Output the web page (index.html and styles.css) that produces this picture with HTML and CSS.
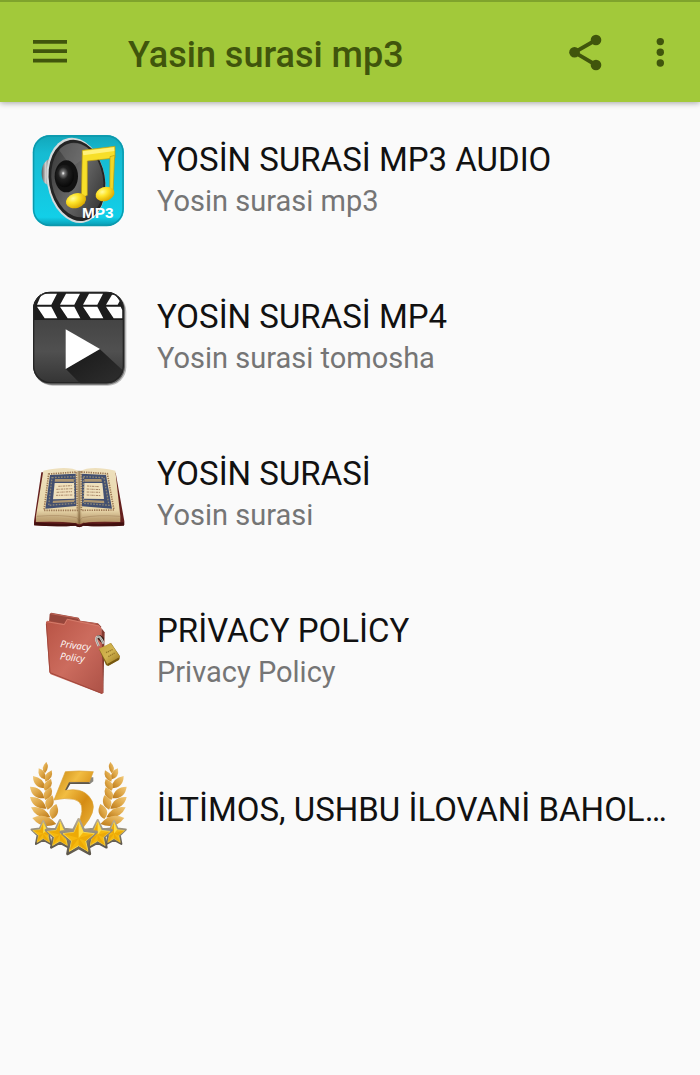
FILE: index.html
```html
<!DOCTYPE html>
<html lang="uz">
    <head>
        <meta charset="utf-8">
        <meta name="viewport" content="width=device-width, initial-scale=1">
        <title>Yasin surasi mp3</title>
        <link rel="stylesheet" href="styles.css">
    </head>
    <body>
        <header class="toolbar">
            <button class="tool" type="button" aria-label="Menu">
                <svg class="tool-icon" viewBox="0 0 48 48"><path d="M7 12h34v3.7H7zM7 21.3h34V25H7zM7 30.8h34v3.8H7z"/></svg>
            </button>
            <h1 class="toolbar-title">Yasin surasi mp3</h1>
            <button class="tool" type="button" aria-label="Share">
                <svg class="tool-icon" viewBox="0 0 48 48">
                    <path d="M34 12L12.5 24.3 34 37" fill="none" stroke="#40550c" stroke-width="3.8"/>
                    <circle cx="34" cy="12" r="5.3"/><circle cx="12.5" cy="24.3" r="5.3"/><circle cx="34" cy="37" r="5.3"/>
                </svg>
            </button>
            <button class="tool" type="button" aria-label="More">
                <svg class="tool-icon" viewBox="0 0 48 48">
                    <circle cx="24.3" cy="13.6" r="3.7"/><circle cx="24.3" cy="24.3" r="3.7"/><circle cx="24.3" cy="35" r="3.7"/>
                </svg>
            </button>
        </header>

        <main>
            <ul class="list">
                <li>
                    <a class="row" href="#audio">
                        <svg class="row-icon" viewBox="24 18 300 300" aria-hidden="true">
                            <defs>
                                <linearGradient id="cyan" x1="0" y1="0" x2="0" y2="1">
                                    <stop offset="0" stop-color="#12a6b9"/><stop offset=".2" stop-color="#16bbd2"/><stop offset=".9" stop-color="#12cfe8"/><stop offset="1" stop-color="#0795ad"/>
                                </linearGradient>
                                <linearGradient id="cone" x1="0" y1="0" x2="1" y2="1">
                                    <stop offset="0" stop-color="#303030"/><stop offset=".5" stop-color="#686868"/><stop offset="1" stop-color="#292929"/>
                                </linearGradient>
                                <radialGradient id="ball" cx=".42" cy=".38" r=".6">
                                    <stop offset="0" stop-color="#fff"/><stop offset=".15" stop-color="#777"/><stop offset=".45" stop-color="#202020"/><stop offset="1" stop-color="#090909"/>
                                </radialGradient>
                                <linearGradient id="metal">
                                    <stop offset="0" stop-color="#555"/><stop offset=".4" stop-color="#ccc"/><stop offset="1" stop-color="#4d5254"/>
                                </linearGradient>
                                <radialGradient id="note" cx=".4" cy=".3" r=".7">
                                    <stop offset="0" stop-color="#fffb9c"/><stop offset=".4" stop-color="#ffe52b"/><stop offset="1" stop-color="#dba800"/>
                                </radialGradient>
                            </defs>
                            <rect x="38" y="30" width="274" height="274" rx="52" fill="url(#cyan)"/>
                            <rect x="41" y="33" width="268" height="268" rx="49" fill="none" stroke="#0c98ac" stroke-width="4"/>
                            <path d="M94 101C75 104 64 121 65 146s11 35 28 33z" fill="url(#metal)"/>
                            <ellipse cx="168" cy="166" rx="87" ry="129" fill="#d5dadb" transform="rotate(-10 168 166)"/>
                            <ellipse cx="171" cy="166" rx="84" ry="123" fill="#242424" transform="rotate(-10 171 166)"/>
                            <ellipse cx="172" cy="165" rx="77" ry="113" fill="url(#cone)" transform="rotate(-10 172 165)"/>
                            <path d="M117 75C143 45 187 50 214 83L155 127z" fill="#777" opacity=".45"/>
                            <ellipse cx="139" cy="154" rx="35" ry="48" fill="#111"/>
                            <ellipse cx="134" cy="153" rx="28" ry="34" fill="url(#ball)"/>
                            <path d="M187 76L285 64V99L202 108V211L184 220z" fill="#f7df29" stroke="#b99a0d" stroke-width="2"/>
                            <path d="M270 95L284 91L279 207L269 214z" fill="#f1d725" stroke="#b99a0d" stroke-width="2"/>
                            <path d="M188 79L282 67L283 78L190 91z" fill="#fff27a"/>
                            <ellipse cx="168" cy="227" rx="31" ry="22" fill="url(#note)" transform="rotate(-18 168 227)"/>
                            <ellipse cx="255" cy="207" rx="29" ry="21" fill="url(#note)" transform="rotate(-18 255 207)"/>
                            <text class="mp3-label" x="186" y="279">MP3</text>
                        </svg>
                        <span class="row-text">
                            <span class="row-title">YOSİN SURASİ MP3 AUDIO</span>
                            <span class="row-subtitle">Yosin surasi mp3</span>
                        </span>
                    </a>
                </li>
                <li>
                    <a class="row" href="#video">
                        <svg class="row-icon" viewBox="24 24 300 300" aria-hidden="true">
                            <defs>
                                <linearGradient id="slate" x1="0" y1="0" x2="0" y2="1">
                                    <stop offset="0" stop-color="#303030"/><stop offset=".3" stop-color="#444"/><stop offset=".65" stop-color="#505050"/><stop offset="1" stop-color="#343434"/>
                                </linearGradient>
                                <linearGradient id="shade" x1="0" y1="0" x2="1" y2="1">
                                    <stop offset="0" stop-color="#181818"/><stop offset="1" stop-color="#303030"/>
                                </linearGradient>
                                <clipPath id="clapper"><rect x="39" y="35" width="272" height="275" rx="52"/></clipPath>
                            </defs>
                            <rect x="43" y="40" width="276" height="277" rx="55" fill="#bbb"/>
                            <rect x="40" y="37" width="275" height="277" rx="54" fill="#686868"/>
                            <g clip-path="url(#clapper)">
                                <path d="M39 35h272v275H39z" fill="url(#slate)"/>
                                <path d="M239 207L320 282V320H190L137 266z" fill="url(#shade)"/>
                                <path d="M39 35h272v85H39z" fill="#1d1d1d"/>
                                <g fill="#fff">
                                    <path d="M65 41H111L94 74H51zM51 80H94L112 115H74z"/>
                                    <path d="M138 41H180L163 74H120zM120 80H163L181 115H143z"/>
                                    <path d="M207 41H249L232 74H189zM189 80H232L250 115H212z"/>
                                    <path d="M276 44H286L299 63L293 74H258zM258 80H302L307 91V115H281z"/>
                                </g>
                            </g>
                            <path d="M137 148L240 207L137 267z" fill="#fff"/>
                            <rect x="41" y="37" width="269" height="271" rx="51" fill="none" stroke="#252525" stroke-width="4"/>
                        </svg>
                        <span class="row-text">
                            <span class="row-title">YOSİN SURASİ MP4</span>
                            <span class="row-subtitle">Yosin surasi tomosha</span>
                        </span>
                    </a>
                </li>
                <li>
                    <a class="row" href="#sura">
                        <svg class="row-icon" viewBox="24 -30 300 300" aria-hidden="true">
                            <defs>
                                <linearGradient id="page" x1="0" y1="0" x2="0" y2="1">
                                    <stop offset="0" stop-color="#eee0bd"/><stop offset=".75" stop-color="#e8d6aa"/><stop offset="1" stop-color="#a8875a"/>
                                </linearGradient>
                                <linearGradient id="fold">
                                    <stop offset="0" stop-color="#c4a878" stop-opacity="0"/><stop offset=".5" stop-color="#62441f"/><stop offset="1" stop-color="#c4a878" stop-opacity="0"/>
                                </linearGradient>
                            </defs>
                            <path d="M64 52L42 199V211Q108 216 166 212Q177 220 190 212Q248 216 313 210V199L287 53z" fill="#65201e"/>
                            <path d="M43 202Q108 209 165 205L178 213L192 205Q253 209 312 202V212Q250 216 190 212L178 217L166 212Q105 216 43 211z" fill="#42100f"/>
                            <path d="M70 47Q145 30 178 49Q215 30 286 47L301 184V201Q225 199 190 203Q178 211 168 204Q110 198 48 201V183z" fill="url(#page)"/>
                            <path d="M50 184Q127 178 170 188L178 198L187 188Q230 179 300 184" fill="none" stroke="#a78961" stroke-width="2"/>
                            <path d="M51 190Q125 185 170 196M187 196Q230 186 300 190M51 196Q120 193 165 202M193 202Q235 192 300 196" fill="none" stroke="#bfa373" stroke-width="2"/>
                            <g fill="none" stroke="#9c7854" stroke-width="5" stroke-dasharray="4 3">
                                <path d="M86 57L169 51L172 166L72 166z"/>
                                <path d="M184 51L262 56L282 165L184 166z"/>
                            </g>
                            <path d="M90 60L167 56L169 153L76 161z" fill="#424f70"/>
                            <path d="M185 56L258 60L276 161L186 154z" fill="#424f70"/>
                            <path d="M96 68L162 65L164 145L86 151z" fill="none" stroke="#8f8875" stroke-width="4" stroke-dasharray="5 4"/>
                            <path d="M190 65L252 68L267 151L190 145z" fill="none" stroke="#8f8875" stroke-width="4" stroke-dasharray="5 4"/>
                            <path d="M105 72H161L162 80H104zM193 72H244L246 80H193zM99 137L162 134V141L98 144zM191 134L252 137L253 145L191 141z" fill="#ad9671"/>
                            <path d="M104 84H162L163 131L99 133z" fill="#efe0bc"/>
                            <path d="M193 84H247L252 132L192 131z" fill="#efe0bc"/>
                            <g fill="none" stroke="#a98768" stroke-width="3" stroke-dasharray="7 2 3 2">
                                <path d="M115 94L155 92M109 103L157 101M110 112L156 110M108 121L157 120"/>
                                <path d="M201 93L238 95M200 102L242 104M200 111L240 112M200 120L243 122"/>
                            </g>
                            <path d="M168 47H187V200L178 209L168 199z" fill="url(#fold)" opacity=".65"/>
                        </svg>
                        <span class="row-text">
                            <span class="row-title">YOSİN SURASİ</span>
                            <span class="row-subtitle">Yosin surasi</span>
                        </span>
                    </a>
                </li>
                <li>
                    <a class="row" href="#privacy">
                        <svg class="row-icon" viewBox="-6 6 300 300" aria-hidden="true">
                            <defs>
                                <linearGradient id="folder" x1="0" y1="0" x2="1" y2="1">
                                    <stop offset="0" stop-color="#b85344"/><stop offset=".5" stop-color="#cc6c5e"/><stop offset="1" stop-color="#ac5146"/>
                                </linearGradient>
                                <linearGradient id="brass" x1="0" y1="0" x2="1" y2="1">
                                    <stop offset="0" stop-color="#c4a23b"/><stop offset=".5" stop-color="#d2b551"/><stop offset="1" stop-color="#9a741c"/>
                                </linearGradient>
                            </defs>
                            <path d="M57 66L59 42L64 38L146 53L151 62L204 70L214 80L208 100z" fill="#96463b"/>
                            <path d="M62 41L144 55L149 64L203 72" fill="none" stroke="#bf6658" stroke-width="3"/>
                            <path d="M214 84L224 97L220 279L208 277z" fill="#833a30"/>
                            <path d="M48 67L52 62L102 71L111 56L207 76L214 86L220 279L216 282L62 223L58 216z" fill="url(#folder)"/>
                            <path d="M50 65L103 74L112 58L207 78L213 86" fill="none" stroke="#d57c6b" stroke-width="3"/>
                            <path d="M49 71L60 218L216 280" fill="none" stroke="#a1483c" stroke-width="3"/>
                            <path d="M198 112Q202 102 212 106L222 114V132L212 126z" fill="#3d211a"/>
                            <path d="M206 138L199 121Q197 109 207 110Q212 111 221 131" fill="none" stroke="#d8d8d3" stroke-width="7"/>
                            <path d="M206 138L199 121Q197 109 207 110Q212 111 221 131" fill="none" stroke="#77736d" stroke-width="2"/>
                            <path d="M207 148L243 129L270 169L267 180L234 198L228 195z" fill="#806218"/>
                            <path d="M207 146L242 129L270 170L232 192z" fill="url(#brass)"/>
                            <path d="M228 158L249 148M235 170L256 158" stroke="#98782a" stroke-width="4" stroke-dasharray="4 2"/>
                            <path d="M233 192L268 173L268 178L235 197z" fill="#76570f"/>
                            <g class="folder-label" transform="rotate(7 91 140)">
                                <text x="90" y="141">Privacy</text>
                                <text x="94" y="178">Policy</text>
                            </g>
                        </svg>
                        <span class="row-text">
                            <span class="row-title">PRİVACY POLİCY</span>
                            <span class="row-subtitle">Privacy Policy</span>
                        </span>
                    </a>
                </li>
                <li>
                    <a class="row" href="#rate">
                        <svg class="row-icon" viewBox="25 27 300 300" aria-hidden="true">
                            <defs>
                                <linearGradient id="gold" x1="0" y1="0" x2="1" y2="1">
                                    <stop offset="0" stop-color="#c4830f"/><stop offset=".35" stop-color="#f2bd42"/><stop offset=".65" stop-color="#d58c14"/><stop offset="1" stop-color="#edb53b"/>
                                </linearGradient>
                                <linearGradient id="leaf" x1="0" y1="0" x2="1" y2="1">
                                    <stop offset="0" stop-color="#f2ca7a"/><stop offset=".5" stop-color="#dda545"/><stop offset="1" stop-color="#b87516"/>
                                </linearGradient>
                                <linearGradient id="rim" x1="0" y1="0" x2="0" y2="1">
                                    <stop offset="0" stop-color="#b6aa91"/><stop offset=".5" stop-color="#8b8474"/><stop offset="1" stop-color="#5c564b"/>
                                </linearGradient>
                                <g id="branch" fill="url(#leaf)">
                                    <path d="M80 36Q91 52 76 70Q60 56 80 36z"/>
                                    <path d="M57 55Q80 62 79 89Q52 86 57 55z"/>
                                    <path d="M96 61Q103 86 77 95Q68 75 96 61z"/>
                                    <path d="M40 78Q73 83 77 115Q40 114 40 78z"/>
                                    <path d="M94 87Q104 111 76 122Q63 100 94 87z"/>
                                    <path d="M31 110Q68 111 74 145Q36 147 31 110z"/>
                                    <path d="M94 112Q106 137 77 150Q61 127 94 112z"/>
                                    <path d="M31 141Q70 138 80 176Q40 178 31 141z"/>
                                    <path d="M98 136Q111 165 84 179Q64 152 98 136z"/>
                                    <path d="M34 172Q74 165 92 202Q50 208 34 172z"/>
                                    <path d="M110 162Q125 192 98 207Q76 180 110 162z"/>
                                    <path d="M38 204Q79 185 110 222Q66 240 38 204z"/>
                                </g>
                                <g id="star">
                                    <path d="M0 -53L16 -20L53 -16L26 10L33 49L0 31L-33 49L-26 10L-53 -16L-16 -20z" fill="url(#rim)" stroke="url(#rim)" stroke-width="9" stroke-linejoin="round"/>
                                    <path d="M0 -47L14 -15L47 -11L21 11L28 42L0 25L-28 42L-21 11L-47 -11L-14 -15z" fill="#f6b80d" stroke="#f9d84e" stroke-width="3"/>
                                    <path d="M0 -46L0 2L-14 -15zM47 -11L0 2L21 11zM28 42L0 2L0 25zM-28 42L0 2L-21 11zM-47 -11L0 2L-14 -15z" fill="#e39b00" opacity=".5"/>
                                    <path d="M0 -46L14 -15L0 2z" fill="#ffdd45"/>
                                </g>
                            </defs>
                            <use href="#branch"/>
                            <use href="#branch" transform="translate(352 0) scale(-1 1)"/>
                            <path d="M146 96L211 102L221 94V82H157z" fill="#8b877d"/>
                            <path d="M137 65Q177 61 221 65L209 96H150L139 121Q185 113 207 138Q235 167 207 210L190 233H164L181 208Q199 157 163 148Q135 142 103 150z" fill="url(#gold)" stroke="#dba235" stroke-width="2"/>
                            <path d="M148 97H207L211 102H152L142 119L136 121z" fill="#5d564a"/>
                            <use href="#star" transform="translate(71 249) scale(.67)"/>
                            <use href="#star" transform="translate(283 249) scale(.67)"/>
                            <use href="#star" transform="translate(121 253) scale(.8)"/>
                            <use href="#star" transform="translate(234 253) scale(.8)"/>
                            <use href="#star" transform="translate(177 262)"/>
                        </svg>
                        <span class="row-text">
                            <span class="row-title">İLTİMOS, USHBU İLOVANİ BAHOL…</span>
                        </span>
                    </a>
                </li>
            </ul>
        </main>
    </body>
</html>
```

FILE: styles.css
```css
* {
    box-sizing: border-box;
}
body {
    margin: 0;
    min-height: 100vh;
    background-color: #fafafa;
    font-family: Roboto, "Noto Sans", sans-serif;
}
.toolbar {
    display: flex;
    align-items: center;
    height: 102px;
    padding: 0 16px 0 26px;
    border-top: 2px solid #7fa32c;
    background-color: #a2c93a;
    box-shadow: 0 1px 6px rgba(0, 0, 0, 0.35);
}
.tool {
    flex: none;
    width: 48px;
    height: 48px;
    padding: 0;
    border: none;
    background: none;
    cursor: pointer;
}
.tool + .tool {
    margin-left: 26px;
}
.tool-icon {
    display: block;
    width: 48px;
    height: 48px;
    fill: #40550c;
}
.toolbar-title {
    flex: 1;
    margin: 0;
    padding: 6px 0 0 54px;
    font-size: 36px;
    line-height: 40px;
    font-weight: 500;
    color: #40550c;
}
.list {
    margin: 0;
    padding: 0;
    list-style: none;
}
.row {
    display: flex;
    align-items: center;
    height: 157px;
    padding: 0 32px 0 28px;
    color: #111;
    text-decoration: none;
}
.row-icon {
    flex: none;
    width: 100px;
    height: 100px;
    margin-right: 29px;
}
.row-text {
    flex: 1;
    min-width: 0;
}
.row-title,
.row-subtitle {
    display: block;
    overflow: hidden;
    white-space: nowrap;
    text-overflow: ellipsis;
}
.row-title {
    padding-top: 2px;
    font-size: 33px;
    line-height: 44px;
}
.row-subtitle {
    padding-bottom: 6px;
    font-size: 29px;
    line-height: 38px;
    color: #757575;
}
.mp3-label {
    fill: #fff;
    font: bold 46px "Liberation Sans", Arial, sans-serif;
}
.folder-label {
    fill: #fff;
    font: italic 29px "Open Sans", sans-serif;
}
```
